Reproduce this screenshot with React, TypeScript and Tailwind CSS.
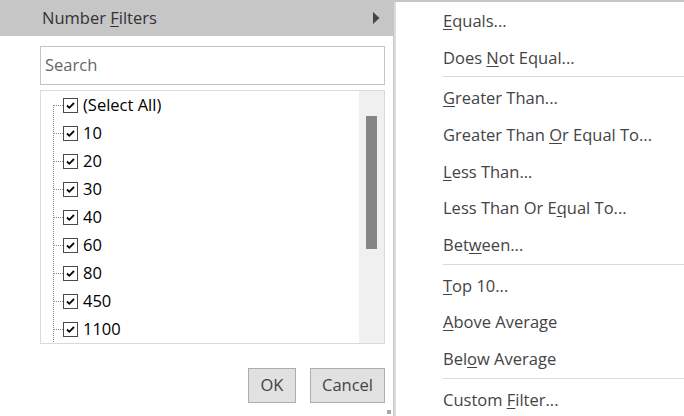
const values = ["(Select All)", "10", "20", "30", "40", "60", "80", "450", "1100"];

type MenuEntry = { pre: string; key: string; post: string } | "sep";

const menu: MenuEntry[] = [
  { pre: "", key: "E", post: "quals..." },
  { pre: "Does ", key: "N", post: "ot Equal..." },
  "sep",
  { pre: "", key: "G", post: "reater Than..." },
  { pre: "Greater Than ", key: "O", post: "r Equal To..." },
  { pre: "", key: "L", post: "ess Than..." },
  { pre: "Less Than Or E", key: "q", post: "ual To..." },
  { pre: "Bet", key: "w", post: "een..." },
  "sep",
  { pre: "", key: "T", post: "op 10..." },
  { pre: "", key: "A", post: "bove Average" },
  { pre: "Bel", key: "o", post: "w Average" },
  "sep",
  { pre: "Custom ", key: "F", post: "ilter..." },
];

function TreeLine({ first }: { first: boolean }) {
  return (
    <svg width="10" height="28" className="shrink-0">
      <line
        x1="0.5"
        y1={first ? 14 : 0}
        x2="0.5"
        y2="28"
        stroke="#8a8a8a"
        strokeDasharray="1 1"
      />
      <line x1="1" y1="14.5" x2="10" y2="14.5" stroke="#8a8a8a" strokeDasharray="1 1" />
    </svg>
  );
}

function CheckBox() {
  return (
    <span className="flex h-[15px] w-[15px] shrink-0 items-center justify-center border border-[#4a4a4a] bg-white">
      <svg width="11" height="11" viewBox="0 0 11 11">
        <path d="M2 5.5 L4.3 7.8 L9 3" fill="none" stroke="#000" strokeWidth="1.8" />
      </svg>
    </span>
  );
}

export default function App() {
  return (
    <div className="flex h-[416px] w-[684px] overflow-hidden bg-[#c6c6c6] font-['Open_Sans',sans-serif] text-[16.5px]">
      <div className="relative flex w-[393px] shrink-0 flex-col bg-white">
        <div className="flex h-[36px] items-center justify-between bg-[#c6c6c6] pl-[42px] pr-[13px] text-[#333]">
          <span>
            Number <span className="underline underline-offset-2">F</span>ilters
          </span>
          <svg width="7" height="12" viewBox="0 0 7 12">
            <path d="M0 0 L6.5 6 L0 12 Z" fill="#444" />
          </svg>
        </div>

        <div className="flex flex-col pl-[40px] pr-[8px]">
          <div className="mt-[10px] flex h-[39px] items-center border border-[#c4c4c4] pl-[4px] text-[#666]">
            Search
          </div>

          <div className="mt-[5px] flex h-[254px] border border-[#dadada]">
            <div className="flex flex-1 flex-col overflow-hidden pl-[12px] text-black">
              {values.map((v, i) => (
                <div key={v} className="flex h-[28px] shrink-0 items-center">
                  <TreeLine first={i === 0} />
                  <CheckBox />
                  <span className="ml-[5px] leading-none">{v}</span>
                </div>
              ))}
            </div>
            <div className="flex w-[25px] flex-col bg-[#f0f0f0] px-[7px] pt-[25px]">
              <div className="h-[133px] bg-[#858585]" />
            </div>
          </div>

          <div className="mt-[24px] flex justify-end gap-[14px] text-[#444]">
            <button className="flex h-[35px] w-[48px] items-center justify-center border border-[#adadad] bg-[#e1e1e1]">
              OK
            </button>
            <button className="flex h-[35px] w-[75px] items-center justify-center border border-[#adadad] bg-[#e1e1e1]">
              Cancel
            </button>
          </div>
        </div>

        <span className="absolute bottom-[2px] right-[2px] h-[4px] w-[4px] bg-[#aaaaaa]" />
      </div>

      <div className="flex flex-1 flex-col pl-px pt-[2px]">
        <div className="flex flex-1 flex-col border-l-2 border-[#dcdcdc] bg-white pt-px text-[#444]">
          {menu.map((m, i) =>
            m === "sep" ? (
              <div key={i} className="h-[4px] shrink-0 pl-[47px]">
                <div className="border-t border-[#dadada]" />
              </div>
            ) : (
              <div key={i} className="flex h-[36.7px] shrink-0 items-center pl-[47px]">
                <span>
                  {m.pre}
                  <span className="underline underline-offset-2">{m.key}</span>
                  {m.post}
                </span>
              </div>
            )
          )}
        </div>
      </div>
    </div>
  );
}
